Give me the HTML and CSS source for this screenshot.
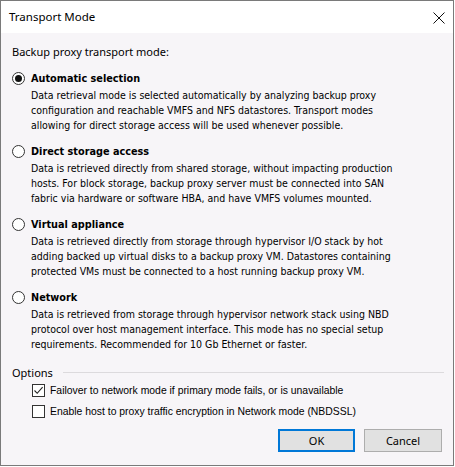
FILE: index.html
```html
<!DOCTYPE html>
<html>
<head>
<meta charset="utf-8">
<link rel="stylesheet" href="styles.css">
</head>
<body>
<div class="window">
  <div class="titlebar">
    <span class="title">Transport Mode</span>
    <svg class="close" width="12" height="12" viewBox="0 0 12 12"><path d="M0.5 0.5 L11.5 11.5 M11.5 0.5 L0.5 11.5" stroke="#111" stroke-width="1" fill="none"/></svg>
  </div>
  <div class="content">
    <div class="heading">Backup proxy transport mode:</div>

    <div class="option">
      <div class="opt-row"><span class="radio checked"></span><span class="opt-label">Automatic selection</span></div>
      <div class="desc">Data retrieval mode is selected automatically by analyzing backup proxy<br>configuration and reachable VMFS and NFS datastores. Transport modes<br>allowing for direct storage access will be used whenever possible.</div>
    </div>

    <div class="option">
      <div class="opt-row"><span class="radio"></span><span class="opt-label">Direct storage access</span></div>
      <div class="desc">Data is retrieved directly from shared storage, without impacting production<br>hosts. For block storage, backup proxy server must be connected into SAN<br>fabric via hardware or software HBA, and have VMFS volumes mounted.</div>
    </div>

    <div class="option">
      <div class="opt-row"><span class="radio"></span><span class="opt-label">Virtual appliance</span></div>
      <div class="desc">Data is retrieved directly from storage through hypervisor I/O stack by hot<br>adding backed up virtual disks to a backup proxy VM. Datastores containing<br>protected VMs must be connected to a host running backup proxy VM.</div>
    </div>

    <div class="option last">
      <div class="opt-row"><span class="radio"></span><span class="opt-label">Network</span></div>
      <div class="desc">Data is retrieved from storage through hypervisor network stack using NBD<br>protocol over host management interface. This mode has no special setup<br>requirements. Recommended for 10 Gb Ethernet or faster.</div>
    </div>

    <div class="group-title"><span>Options</span><span class="rule"></span></div>
    <div class="check-row"><span class="checkbox"><svg width="11" height="11" viewBox="0 0 11 11"><path d="M1.5 5.5 L4.2 8.3 L9.6 2.2" stroke="#222" stroke-width="1.1" fill="none"/></svg></span><span class="check-label">Failover to network mode if primary mode fails, or is unavailable</span></div>
    <div class="check-row"><span class="checkbox"></span><span class="check-label">Enable host to proxy traffic encryption in Network mode (NBDSSL)</span></div>

    <div class="buttons">
      <button class="btn primary">OK</button>
      <button class="btn">Cancel</button>
    </div>
  </div>
</div>
</body>
</html>
```

FILE: styles.css
```css
html, body {
  margin: 0;
  padding: 0;
  background: #ffffff;
}
.window {
  width: 452px;
  height: 464px;
  border: 1px solid #7a7a7a;
  display: flex;
  flex-direction: column;
  background: #f7f5f8;
}
.titlebar {
  height: 32px;
  flex: 0 0 32px;
  background: #ffffff;
  display: flex;
  align-items: center;
  justify-content: space-between;
  padding: 0 8px 0 8px;
}
.title {
  font-family: "Noto Sans", sans-serif;
  font-size: 11.5px;
  color: #000;
  margin-top: -1px;
}
.close {
  display: block;
  margin-top: 2px;
}
.content {
  flex: 1;
  padding: 11px 9px 0 11px;
  display: flex;
  flex-direction: column;
}
.heading {
  font-family: "Noto Sans", sans-serif;
  font-size: 11px;
  line-height: 16px;
  height: 16px;
  color: #000;
  margin-bottom: 10px;
}
.option {
  margin-bottom: 10px;
}
.option.last {
  margin-bottom: 12px;
}
.opt-row {
  display: flex;
  align-items: center;
  height: 17px;
  gap: 6px;
}
.radio {
  width: 13px;
  height: 13px;
  box-sizing: border-box;
  border: 1px solid #333;
  border-radius: 50%;
  background: #fff;
  position: relative;
  flex: 0 0 13px;
}
.radio.checked::after {
  content: "";
  position: absolute;
  left: 2px;
  top: 2px;
  width: 7px;
  height: 7px;
  border-radius: 50%;
  background: #111;
}
.opt-label {
  font-family: "DejaVu Sans Condensed", "DejaVu Sans", sans-serif;
  font-stretch: condensed;
  font-weight: bold;
  font-size: 10.8px;
  color: #000;
}
.desc {
  margin: 1px 0 0 19px;
  font-family: "DejaVu Sans Condensed", "DejaVu Sans", sans-serif;
  font-stretch: condensed;
  font-size: 10.5px;
  line-height: 15px;
  color: #000;
  white-space: nowrap;
}
.group-title {
  display: flex;
  align-items: center;
  height: 16px;
  gap: 10px;
  font-family: "Noto Sans", sans-serif;
  font-size: 11px;
  color: #000;
}
.rule {
  flex: 1;
  height: 1px;
  background: #dcdadd;
}
.check-row {
  display: flex;
  align-items: center;
  height: 21px;
  padding-left: 20px;
  gap: 5px;
}
.checkbox {
  width: 13px;
  height: 13px;
  box-sizing: border-box;
  border: 1px solid #333;
  background: #fff;
  flex: 0 0 13px;
  display: flex;
  align-items: center;
  justify-content: center;
}
.checkbox svg {
  display: block;
}
.check-label {
  font-family: "Liberation Sans", sans-serif;
  font-size: 10.4px;
  color: #000;
  white-space: nowrap;
}
.buttons {
  display: flex;
  justify-content: flex-end;
  gap: 9px;
  margin-top: 7px;
  margin-right: 2px;
}
.btn {
  width: 78px;
  height: 23px;
  box-sizing: border-box;
  background: #e1e1e1;
  border: 1px solid #adadad;
  font-family: "Noto Sans", sans-serif;
  font-size: 11px;
  color: #000;
  padding: 0;
  margin: 0;
}
.btn.primary {
  width: 77px;
  border: 2px solid #0078d7;
}
```
